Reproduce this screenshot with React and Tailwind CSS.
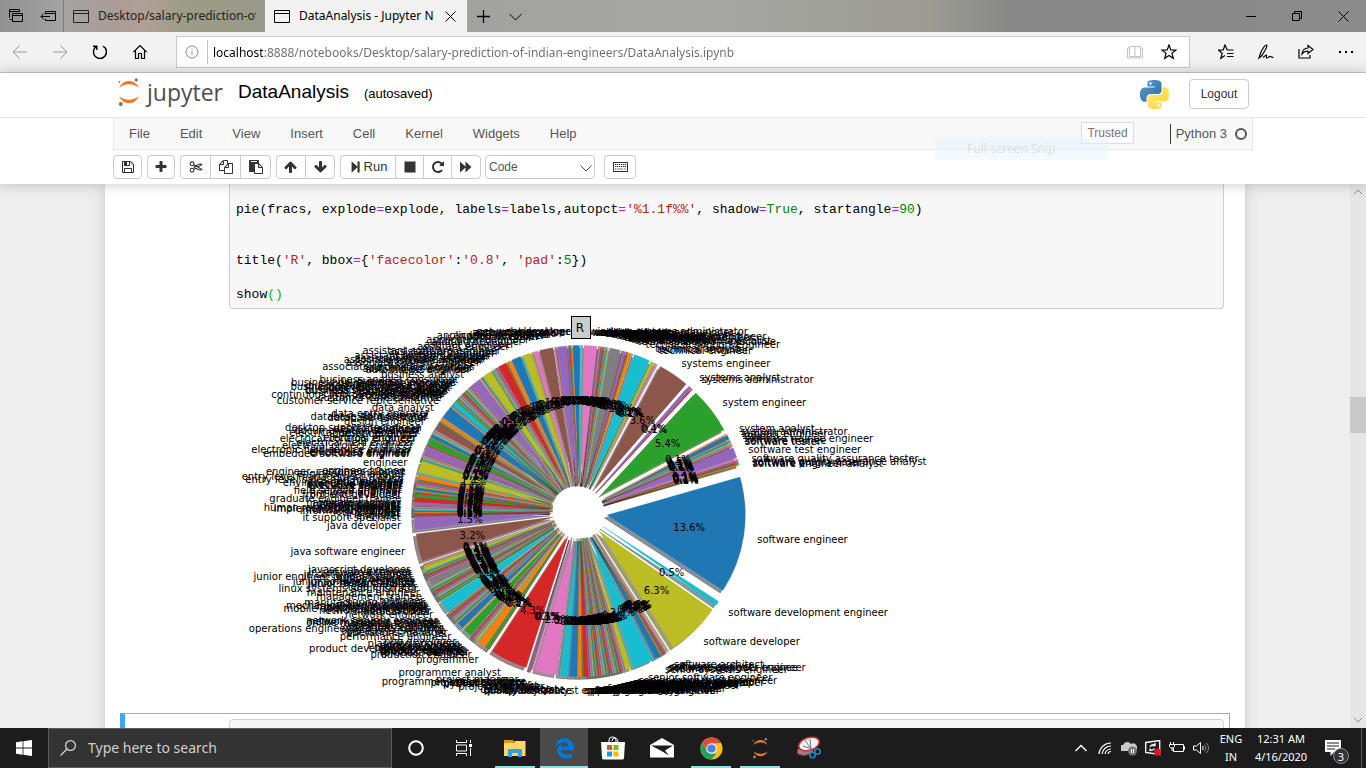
import React from 'react';
import { FaEdgeLegacy } from 'react-icons/fa';

/* ---------- pie chart data ---------- */

const PALETTE = ['#1f77b4', '#ff7f0e', '#2ca02c', '#d62728', '#9467bd', '#8c564b', '#e377c2', '#7f7f7f', '#bcbd22', '#17becf'];

// [start, end, palette index], in degrees counter-clockwise from the top.
const MAJOR = [
  [0, 2.7, 0], [4.3, 8.2, 4], [9, 14.6, 5], [15, 16.5, 6], [17.1, 20.4, 8], [20.8, 24.6, 0], [24.8, 26.1, 1],
  [26.3, 29.9, 3], [32.2, 36, 8], [37, 41.4, 4], [48.4, 50.4, 9], [51, 56, 0], [56.3, 57.3, 1], [57.5, 61, 5],
  [63, 63.9, 0], [64.1, 66.6, 2], [67.4, 70, 4], [72, 76.9, 8], [77.3, 79, 1], [81.8, 82.9, 0], [84.1, 85.4, 2],
  [85.5, 87, 3], [87, 88.2, 4], [91.6, 97, 4], [97, 108.5, 5], [109.8, 111.2, 8], [114.3, 117, 7],
  [122.7, 127.6, 9], [132.3, 135, 0], [135.4, 139, 2], [141, 141.8, 8], [142, 145.3, 1], [145.5, 146.6, 2],
  [146.8, 162.3, 3], [163.6, 172.6, 6], [172.9, 176.1, 9], [176.2, 179.3, 0], [179.4, 180.6, 1], [181, 183, 3],
  [196, 198.2, 8], [198.4, 206.8, 9], [207, 209.3, 0], [212.5, 235.2, 8], [235.2, 237, 9], [237, 286, 0],
  [288.4, 292.8, 4], [295.5, 297.4, 0], [297.8, 317.2, 2], [317.2, 317.6, 3], [317.6, 319, 4], [319, 332, 5],
  [332, 332.9, 6], [333.5, 334.5, 8], [334.6, 341.4, 9], [341.6, 343, 1], [343.8, 345, 4], [345.5, 350, 7],
  [353.7, 359, 6],
];

function buildSlices() {
  const out = [];
  MAJOR.forEach(([a, b, c], i) => {
    out.push({ a, b, c });
    const next = MAJOR[i + 1] ? MAJOR[i + 1][0] : 360;
    const gap = next - b;
    if (gap > 0.05) {
      const n = Math.max(1, Math.round(gap / 0.38));
      for (let k = 0; k < n; k += 1) {
        out.push({ a: b + (gap * k) / n, b: b + (gap * (k + 1)) / n, c: (c + 1 + k) % 10 });
      }
    }
  });
  return out;
}

const SLICES = buildSlices();
const CX = 351;
const CY = 202;
const R = 138;
const SHIFT = R * 0.2;
const LABEL_R = R * 1.3;
const rad = (d) => (d * Math.PI) / 180;
const at = (deg, r) => [-Math.sin(rad(deg)) * r, -Math.cos(rad(deg)) * r];

function wedge({ a, b }) {
  const [ox, oy] = at((a + b) / 2, SHIFT);
  const [x1, y1] = at(a, R);
  const [x2, y2] = at(b, R);
  const X = CX + ox;
  const Y = CY + oy;
  return `M${X.toFixed(2)} ${Y.toFixed(2)}L${(X + x1).toFixed(2)} ${(Y + y1).toFixed(2)}A${R} ${R} 0 0 0 ${(X + x2).toFixed(2)} ${(Y + y2).toFixed(2)}Z`;
}

function shade(hex) {
  const n = parseInt(hex.slice(1), 16);
  const f = (v) => Math.round(v * 0.3);
  return `rgb(${f(n >> 16)},${f((n >> 8) & 255)},${f(n & 255)})`;
}

// Labels with a readable place of their own: [height above the centre, text].
const LEFT = [
  [176, 'application developer'], [172, 'application engineer'], [170, 'android developer'], [167, 'asp.net developer'],
  [165, 'assistant engineer'], [161, 'assistant software engineer'], [160, 'assistant programmer'], [158, 'assistant manager'],
  [156, 'assistant systems engineer'], [155, 'associate developer'], [153, 'assistant system engineer'], [152, 'associate software engineer'],
  [151, 'associate manager'], [149, 'associate system engineer'], [145, 'associate technical operations'], [144, 'automation engineer'],
  [143, 'asst. project engineer'], [142, 'automotive engineer'], [137, 'business analyst'],
  [132, 'business analyst consultant'], [130, 'business consultant'], [129, 'business development executive'], [128, 'business office manager'],
  [126, 'business intelligence analyst'], [125, 'business development manager'], [124, 'business system analyst'], [123, 'cad drafter'],
  [122, 'business systems consultant'], [121, 'business technology analyst'], [120, 'catalog associate'], [119, 'civil engineer'], [118, 'client services associate'],
  [117, 'continuous improvement engineer'], [116, 'cnc programmer'], [114, 'customer care executive'], [111, 'customer service representative'],
  [104, 'data analyst'], [98, 'data entry operator'], [96, 'data scientist'], [95, 'database administrator'], [94, 'database developer'],
  [90, 'design engineer'], [84, 'desktop support technician'], [83, 'desktop engineer'], [82, 'developer'], [81, 'documentation specialist'],
  [79, 'electrical design engineer'], [78, 'dotnet developer'], [74, 'electrical engineer'], [73, 'electrical controls engineer'],
  [69, 'electrical field engineer'], [66, 'electrical project engineer'], [62, 'electronic field service engineer'], [60, 'electronics engineer'],
  [59, 'embedded engineer'], [58, 'embedded software engineer'], [49, 'engineer'], [41, 'engineer trainee'], [40, 'engineer- customer support'],
  [38, 'engineering manager'], [35, 'entry level management trainee'], [32, 'entry level sales and marketing'], [30, 'etl developer'],
  [29, 'environmental engineer'], [28, 'executive assistant'], [27, 'executive engineer'], [26, 'executive recruiter'], [25, 'faculty'],
  [23, 'field engineer'], [21, 'field service engineer'], [19, 'firmware engineer'], [17, 'front end developer'],
  [13, 'graduate engineer trainee'], [9, 'hardware engineer'], [8, 'graphic designer'], [7, 'help desk analyst'], [6, 'html developer'],
  [5, 'hr recruiter'], [4, 'human resources associate'], [3, 'implementation engineer'], [2, 'industrial engineer'], [1, 'information security'],
  [0, 'ios developer'], [-2, 'it analyst'], [-4, 'it engineer'], [-6, 'it support specialist'], [-14, 'java developer'], [-40, 'java software engineer'],
  [-58, 'javascript developer'], [-60, 'java trainee'], [-61, 'jr. software engineer'], [-63, 'jr. software developer'],
  [-65, 'junior engineer product support'], [-67, 'junior engineer'], [-69, 'junior recruiter'], [-70, 'junior software engineer'],
  [-71, 'junior research fellow'], [-72, 'junior system analyst'], [-75, 'lead engineer'], [-77, 'linux systems administrator'], [-81, 'maintenance engineer'],
  [-85, 'management trainee'], [-89, 'manager'], [-91, 'manufacturing engineer'], [-93, 'marketing analyst'], [-94, 'mechanical design engineer'],
  [-95, 'marketing coordinator'], [-96, 'mechanical engineer'], [-97, 'mobile application developer'], [-99, 'network administrator'],
  [-100, 'medical coder'], [-103, 'network engineer'], [-109, 'network security engineer'], [-110, 'network support engineer'],
  [-111, 'online marketing manager'], [-112, 'operation engineer'], [-114, 'operations analyst'], [-116, 'operations engineer'],
  [-117, 'operations engineer and jetty handling'], [-119, 'operations executive'], [-121, 'operations manager'], [-125, 'performance engineer'],
  [-130, 'php developer'], [-132, 'planning engineer'], [-134, 'portfolio analyst'], [-135, 'phone engineer'], [-136, 'process associate'],
  [-137, 'product development engineer'], [-138, 'process engineer'], [-139, 'product engineer'], [-140, 'product manager'], [-141, 'product designer'],
  [-143, 'production engineer'], [-148, 'programmer'], [-161, 'programmer analyst'], [-170, 'programmer analyst trainee'],
  [-171, 'project assistant'], [-171, 'project coordinator'], [-175, 'project engineer'],
];

const RIGHT = [
  [167, 'technical support engineer'], [161, 'technical engineer'], [162, 'technical recruiter'], [163, 'technical analyst'],
  [170, 'technical support executive'], [171, 'technical support specialist'], [172, 'technology analyst'], [173, 'telecom engineer'],
  [174, 'telecom support engineer'], [148, 'systems engineer'], [134, 'systems analyst'], [132, 'systems administrator'],
  [109, 'system engineer'], [83, 'system analyst'], [80, 'system administrator'], [78, 'support engineer'], [76, 'sql dba'], [73, 'software trainee engineer'],
  [71, 'software trainee'], [70, 'software tester'], [62, 'software test engineer'], [53, 'software quality assurance tester'],
  [50, 'software quality assurance analyst'], [49, 'software programmer'], [48, 'software engineer analyst'], [-28, 'software engineer'],
  [-101, 'software development engineer'], [-130, 'software developer'], [-153, 'software architect'], [-155, 'software analyst'],
  [-156, 'software engineer trainee'], [-156, 'software designer engineer'], [-157, 'site manager'], [-158, 'senior systems engineer'], [-166, 'senior software engineer'],
  [-171, 'senior software developer'], [-172, 'senior web developer'], [-173, 'senior sales executive'], [-174, 'senior project engineer'],
];

// Crowded labels spread over an arc: [from, to, texts].
const FANS = [
  [1.5, 13, ['.net developer', '.net web developer', 'account executive', 'account manager', 'admin assistant', 'analyst', 'android developer', 'app developer']],
  [160, 179.5, ['project manager', 'project officer', 'python developer', 'qa analyst', 'qa engineer', 'qa trainee', 'quality analyst', 'quality associate', 'quality assurance', 'quality analyst']],
  [180.5, 199, ['e operations analyst', 'quality assurance engineer', 'quality control engineer', 'quality engineer', 'r&d engineer', 'recruiter', 'recruitment coordinator', 'research analyst', 'research engineer', 'research scientist', 'rf engineer', 'risk consultant', 'ruby on rails developer', 'sales account manager', 'sales coordinator', 'sales engineer', 'sales executive', 'salesforce developer', 'sap abap consultant', 'sap analyst', 'secretary', 'seo engineer', 'senior design engineer', 'senior engineer', 'senior business analyst', 'senior quality engineer', 'senior network engineer', 'senior mechanical engineer']],
  [344, 357, ['testing engineer', 'test engineer', 'technical writer', 'telecommunication engineer', 'trainee engineer', 'trainee developer', 'trainee decision scientist', 'team lead', 'training specialist', 'ui developer', 'ux designer', 'visiting faculty', 'web application developer', 'web designer', 'web developer', 'web intern', 'website developer', 'windows systems administrator']],
];

function PieLabel({ x, y, text, right }) {
  return <text x={x.toFixed(1)} y={(y + 3.5).toFixed(1)} textAnchor={right ? 'start' : 'end'}>{text}</text>;
}

const reach = (h) => Math.sqrt(LABEL_R * LABEL_R - h * h);

function PieChart() {
  return (
    <svg viewBox="0 0 720 404" role="img" aria-label="R" className="block h-[404px] w-[720px] shrink-0 text-black" fontFamily="'DejaVu Sans', sans-serif" fontSize="10">
      <g transform="translate(-2.8 2.8)" fillOpacity="0.5" strokeOpacity="0.5" strokeWidth="0.6">
        {SLICES.map((s, i) => <path key={i} d={wedge(s)} fill={shade(PALETTE[s.c])} stroke={shade(PALETTE[s.c])} />)}
      </g>
      <g strokeWidth="0.3">
        {SLICES.map((s, i) => <path key={i} d={wedge(s)} fill={PALETTE[s.c]} stroke={PALETTE[s.c]} />)}
      </g>
      <g textAnchor="middle">
        {SLICES.map((s, i) => {
          const [x, y] = at((s.a + s.b) / 2, R * 0.8);
          return <text key={i} x={(CX + x).toFixed(1)} y={(CY + y + 3.5).toFixed(1)}>{`${((s.b - s.a) / 3.6).toFixed(1)}%`}</text>;
        })}
      </g>
      {LEFT.map(([h, t]) => <PieLabel key={t + h} x={CX - reach(h)} y={CY - h} text={t} />)}
      {RIGHT.map(([h, t]) => <PieLabel key={t + h} x={CX + reach(h)} y={CY - h} text={t} right />)}
      {FANS.map(([a, b, list]) => list.map((t, i) => {
        const [x, y] = at(a + ((b - a) * i) / (list.length - 1), LABEL_R);
        return <PieLabel key={a + t + i} x={CX + x} y={CY + y} text={t} right={a >= 180} />;
      }))}
      <rect x="342.5" y="7.5" width="19" height="22" fill="#cccccc" stroke="#000" />
      <text x="351" y="23" fontSize="12" textAnchor="middle">R</text>
    </svg>
  );
}

/* ---------- icons ---------- */

const ICONS = {
  save: 'M512 1536h768v-384h-768v384zm896 0h128v-896q0-14-10-38.5t-20-34.5l-281-281q-10-10-34-20t-39-10v416q0 40-28 68t-68 28h-576q-40 0-68-28t-28-68v-416h-128v1280h128v-416q0-40 28-68t68-28h832q40 0 68 28t28 68v416zm-384-928v-320q0-13-9.5-22.5t-22.5-9.5h-192q-13 0-22.5 9.5t-9.5 22.5v320q0 13 9.5 22.5t22.5 9.5h192q13 0 22.5-9.5t9.5-22.5zm640 32v928q0 40-28 68t-68 28h-1344q-40 0-68-28t-28-68v-1344q0-40 28-68t68-28h928q40 0 88 20t76 48l280 280q28 28 48 76t20 88z',
  plus: 'M1600 736v192q0 40-28 68t-68 28h-416v416q0 40-28 68t-68 28h-192q-40 0-68-28t-28-68v-416h-416q-40 0-68-28t-28-68v-192q0-40 28-68t68-28h416v-416q0-40 28-68t68-28h192q40 0 68 28t28 68v416h416q40 0 68 28t28 68z',
  copy: 'M1696 384q40 0 68 28t28 68v1216q0 40-28 68t-68 28h-960q-40 0-68-28t-28-68v-288h-544q-40 0-68-28t-28-68v-672q0-40 20-88t48-76l408-408q28-28 76-48t88-20h416q40 0 68 28t28 68v328q68-40 128-40h416zm-544 213l-299 299h299v-299zm-640-384l-299 299h299v-299zm196 647l316-316v-416h-384v416q0 40-28 68t-68 28h-416v640h512v-256q0-40 20-88t48-76zm956 804v-1152h-384v416q0 40-28 68t-68 28h-416v640h896z',
  paste: 'M768 1664h896v-640h-416q-40 0-68-28t-28-68v-416h-384v1152zm256-1440v-64q0-13-9.5-22.5t-22.5-9.5h-704q-13 0-22.5 9.5t-9.5 22.5v64q0 13 9.5 22.5t22.5 9.5h704q13 0 22.5-9.5t9.5-22.5zm256 672h299l-299-299v299zm512 128v672q0 40-28 68t-68 28h-960q-40 0-68-28t-28-68v-160h-544q-40 0-68-28t-28-68v-1344q0-40 28-68t68-28h1088q40 0 68 28t28 68v328q21 13 36 28l408 408q28 28 48 76t20 88z',
  up: 'M1611 971q0 51-37 90l-75 75q-38 38-91 38-54 0-90-38l-294-293v704q0 52-37.5 84.5t-90.5 32.5h-128q-53 0-90.5-32.5t-37.5-84.5v-704l-294 293q-36 38-90 38t-90-38l-75-75q-38-38-38-90 0-53 38-91l651-651q35-37 90-37 54 0 91 37l651 651q37 39 37 91z',
  repeat: 'M1664 256v448q0 26-19 45t-45 19h-448q-42 0-59-40-17-39 14-69l138-138q-148-137-349-137-104 0-198.5 40.5t-163.5 109.5-109.5 163.5-40.5 198.5 40.5 198.5 109.5 163.5 163.5 109.5 198.5 40.5q119 0 225-52t179-147q7-10 23-12 15 0 25 9l137 138q9 8 9.5 20.5t-7.5 22.5q-109 132-264 204.5t-327 72.5q-156 0-298-61t-245-164-164-245-61-298 61-298 164-245 245-164 298-61q147 0 284.5 55.5t244.5 156.5l130-129q29-31 70-14 39 17 39 59z',
  stop: 'M192 192h1408v1408H192z',
  forward: 'M130 190l700 650V190l760 706-760 706V952l-700 650z',
  step: 'M330 160l760 700V180h270v1432h-270V932l-760 700z',
};

function Fa({ name, flip }) {
  return (
    <svg viewBox="0 0 1792 1792" className={flip ? 'size-[14px] rotate-180' : 'size-[14px]'} fill="currentColor" aria-hidden="true">
      <path d={ICONS[name]} />
    </svg>
  );
}

function Line({ children, className = 'size-4', box = '0 0 16 16', w = 1 }) {
  return (
    <svg viewBox={box} className={className} fill="none" stroke="currentColor" strokeWidth={w} aria-hidden="true">
      {children}
    </svg>
  );
}

function JupyterMark({ className, dot = '#767677' }) {
  return (
    <svg viewBox="0 0 24 30" className={className} aria-hidden="true">
      <path d="M2 10C4 5 8 3 12 3s8 2 10 7C19 7.600 16 6.500 12 6.500S5 7.600 2 10zM2 19c2 5 6 7 10 7s8-2 10-7c-3 2.400-6 3.500-10 3.500S5 21.400 2 19z" fill="#F37726" />
      <circle cx="19.500" cy="2" r="1.700" fill={dot} />
      <circle cx="2" cy="4" r="1" fill={dot} />
      <circle cx="3.500" cy="27" r="2.100" fill={dot} />
    </svg>
  );
}

const SNAKE = 'M14.25.18l.9.2.73.26.59.3.45.32.34.34.25.34.16.33.1.3.04.26.02.2-.01.13V8.500l-.05.63-.13.55-.21.46-.26.38-.3.31-.33.25-.35.19-.35.14-.33.1-.3.07-.26.04-.21.02H8.770l-.69.05-.59.14-.5.22-.41.27-.33.32-.27.35-.2.36-.15.37-.1.35-.07.32-.04.27-.02.21v3.060H3.170l-.21-.03-.28-.07-.32-.12-.35-.18-.36-.26-.36-.36-.35-.46-.32-.59-.28-.73-.21-.88-.14-1.050-.05-1.230.06-1.220.16-1.040.24-.87.32-.71.36-.57.4-.44.42-.33.42-.24.4-.16.36-.1.32-.05.24-.01h.16l.06.01h8.160v-.83H6.180l-.01-2.750-.02-.37.05-.34.11-.31.17-.28.25-.26.31-.23.38-.2.44-.18.51-.15.58-.12.64-.1.71-.06.77-.04.84-.02 1.270.05zm-6.300 1.980l-.23.33-.08.41.08.41.23.34.33.22.41.09.41-.09.33-.22.23-.34.08-.41-.08-.41-.23-.33-.33-.22-.41-.09-.41.09z';

function PythonLogo() {
  return (
    <svg viewBox="0 0 24 24" className="size-[29px]" aria-hidden="true">
      <defs>
        <linearGradient id="pyBlue" x1="0" y1="0" x2="1" y2="1"><stop offset="0" stopColor="#5a9fd4" /><stop offset="1" stopColor="#306998" /></linearGradient>
        <linearGradient id="pyYellow" x1="0" y1="0" x2="1" y2="1"><stop offset="0" stopColor="#ffd43b" /><stop offset="1" stopColor="#ffe873" /></linearGradient>
      </defs>
      <path d={SNAKE} fill="url(#pyBlue)" />
      <path d={SNAKE} fill="url(#pyYellow)" transform="rotate(180 12 12)" />
    </svg>
  );
}

const WindowIcon = () => (
  <Line className="size-4 shrink-0"><path d="M.5 2.500h15v12H.5zM.5 5.500h15" /></Line>
);

/* ---------- browser chrome ---------- */

function IconButton({ label, className = '', children }) {
  return (
    <button type="button" aria-label={label} className={`flex items-center justify-center ${className}`}>
      {children}
    </button>
  );
}

function TabBar() {
  return (
    <div className="flex h-8 shrink-0 items-stretch bg-[linear-gradient(90deg,#919191_0px,#a3a3a3_64px,#a99d97_110px,#b19f94_145px,#9d9c85_185px,#989a8a_265px,#a2a29f_480px,#a6a6a3_700px,#9c9c94_930px,#878787_1010px,#8c8c8c_1366px)] text-black">
      <IconButton label="Tabs set aside" className="w-8">
        <Line><path d="M1.500 9.500v-8h10v2M1.500 3.500h10" /><path d="M4.500 5.500h10v8h-10zM4.500 7.500h10" /><path d="M2 11.500h2.500" /></Line>
      </IconButton>
      <IconButton label="Set tabs aside" className="w-8 border-r border-[#7d7d7d]">
        <Line><path d="M5.500 6V3.500h10v9h-10V11M5.500 5.500h10M1 8.500h9M4 5.500l-3 3 3 3" /></Line>
      </IconButton>
      <button type="button" className="flex w-[201px] items-center gap-[9px] overflow-hidden px-[9px] text-[#222]">
        <WindowIcon />
        <span className="overflow-hidden whitespace-nowrap text-xs">Desktop/salary-prediction-of-indian</span>
      </button>
      <div className="flex w-[202px] items-center bg-[#f2f2f2] pl-[9px]">
        <button type="button" className="flex w-40 items-center gap-[9px] overflow-hidden">
          <WindowIcon />
          <span className="overflow-hidden whitespace-nowrap text-xs">DataAnalysis - Jupyter Notebook</span>
        </button>
        <IconButton label="Close tab" className="w-8"><Line className="size-[11px]" box="0 0 11 11"><path d="M.5.5l10 10M10.500.5l-10 10" /></Line></IconButton>
      </div>
      <IconButton label="New tab" className="w-8"><Line className="size-[13px]" box="0 0 13 13" w={1.3}><path d="M6.500 0v13M0 6.500h13" /></Line></IconButton>
      <IconButton label="Tab previews" className="w-8"><Line className="size-[13px]" box="0 0 13 13"><path d="M.5 4l6 6 6-6" /></Line></IconButton>
      <div className="flex-1" />
      <IconButton label="Minimize" className="w-[46px]"><Line className="size-[10px]" box="0 0 10 10"><path d="M0 5.500h10" /></Line></IconButton>
      <IconButton label="Restore" className="w-[46px]"><Line className="size-[10px]" box="0 0 10 10"><path d="M.5 2.500h7v7h-7zM2.500 2.500v-2h7v7h-2" /></Line></IconButton>
      <IconButton label="Close" className="w-[46px]"><Line className="size-[11px]" box="0 0 11 11"><path d="M.5.5l10 10M10.500.5l-10 10" /></Line></IconButton>
    </div>
  );
}

function AddressBar() {
  return (
    <div className="flex h-[41px] shrink-0 items-center border-b border-[#c9c9c9] bg-[#f2f2f2] text-black">
      <IconButton label="Back" className="w-10 text-[#9b9b9b]"><Line><path d="M1 8h14M7.500 1.500L1 8l6.500 6.500" /></Line></IconButton>
      <IconButton label="Forward" className="w-10 text-[#9b9b9b]"><Line><path d="M1 8h14M8.500 1.500L15 8l-6.500 6.500" /></Line></IconButton>
      <IconButton label="Refresh" className="w-10"><Line w={1.4}><path d="M11 2.200a6.500 6.500 0 1 1-6.500.2M4.800 6V2.200H1" /></Line></IconButton>
      <IconButton label="Home" className="w-10"><Line w={1.2}><path d="M1.500 8L8 1.500 14.500 8M3.500 7v7.500h3v-5h3v5h3V7" /></Line></IconButton>
      <div className="ml-4 flex h-8 flex-1 items-center border border-[#c9c9c9] bg-white">
        <IconButton label="Site information" className="h-6 w-[31px] border-r border-[#c4c4c4] text-[#8a8a8a]">
          <Line className="size-[14px]" box="0 0 14 14"><circle cx="7" cy="7" r="6" /><path d="M7 6v4M7 3.500v1" /></Line>
        </IconButton>
        <div className="ml-[5px] flex-1 pt-px text-xs">
          <input aria-label="Address" defaultValue="localhost:8888/notebooks/Desktop/salary-prediction-of-indian-engineers/DataAnalysis.ipynb" className="w-full bg-[linear-gradient(90deg,#000_50px,#6d6d6d_50px)] bg-clip-text text-transparent outline-none" />
        </div>
        <IconButton label="Reading view" className="w-8 text-[#c2c2c2]"><Line><path d="M8 2.500H2.500v10H8zM8 2.500h5.500v10H8M2.500 4h-2v10h15V4h-2" /></Line></IconButton>
        <IconButton label="Add to favorites" className="mr-[6px] ml-1 w-7"><Line w={1.2}><path d="M8 1l1.800 4.900 5.200.2-4.100 3.200 1.400 5L8 11.400l-4.300 2.900 1.400-5L1 6.100l5.200-.2z" /></Line></IconButton>
      </div>
      <div className="ml-4 flex">
        <IconButton label="Favorites" className="w-10"><Line w={1.2}><path d="M15.500 6H9.200L7 1 5.200 5.900.5 6.100l3.700 3.200-1.400 5L7 11.500M9 9.500h6.500M9 12.500h6.500" /></Line></IconButton>
        <IconButton label="Add notes" className="w-10"><Line w={1.2}><path d="M1 14L3 8C5 4 7 1 8.500 1c1 1 0 3-1.500 5.500L3.500 12 1 14zM5 13.500c2-2 3-3 3.500-2.500s-1 3 .5 3 2-2 3.500-1.500S14 14 15.500 13" /></Line></IconButton>
        <IconButton label="Share" className="w-10"><Line w={1.2}><path d="M1 5v9h11v-3M10 1.500l5 4-5 4V7C7 7 5.500 8 4 10c.3-3.500 2.500-5.700 6-6z" /></Line></IconButton>
        <IconButton label="More" className="w-10"><Line><path d="M1 8h2M7 8h2M13 8h2" strokeWidth="2" /></Line></IconButton>
      </div>
    </div>
  );
}

/* ---------- notebook ---------- */

const BTN = 'flex h-6 items-center justify-center border border-[#ccc] bg-white text-[#333] ';
const MENUS = ['File', 'Edit', 'View', 'Insert', 'Cell', 'Kernel', 'Widgets', 'Help'];

function NotebookHeader() {
  return (
    <header className="relative z-10 shrink-0 bg-white pb-[5px] shadow-[0_0_12px_1px_rgba(87,87,87,0.3)]">
      <div className="border-b border-[#e7e7e7]">
        <div className="mx-auto flex h-11 max-w-[1140px] items-center pr-1 pb-[2px] pl-1">
          <a href="#tree" className="flex items-center gap-[6px] pb-1 text-[#4e4e4e]">
            <JupyterMark className="h-[29px] w-6" />
            <span className="font-['Open_Sans',sans-serif] text-[23px] leading-7">jupyter</span>
          </a>
          <h1 className="ml-[15px] pb-1 text-[19px] text-black">DataAnalysis</h1>
          <span className="ml-[15px] text-[13px] text-black">(autosaved)</span>
          <div className="flex-1" />
          <PythonLogo />
          <button type="button" className="ml-5 h-[30px] w-[60px] rounded-sm border border-[#ccc] bg-white pb-px text-xs text-[#333]">Logout</button>
        </div>
      </div>
      <div className="mx-auto max-w-[1140px]">
        <nav className="flex h-8 items-center border border-t-0 border-[#e7e7e7] bg-[#f8f8f8] text-[13px] text-[#555]">
          {MENUS.map((m) => <button key={m} type="button" className="px-[15px]">{m}</button>)}
          <div className="flex-1" />
          <button type="button" className="mb-[2px] h-[22px] border border-[#ddd] bg-white/60 px-[5px] text-xs text-[#777]">Trusted</button>
          <span className="ml-9 flex h-5 items-center gap-2 border-l border-[#333] px-[5px]">
            Python 3
            <Line className="size-3" box="0 0 12 12" w={2}><circle cx="6" cy="6" r="5" /></Line>
          </span>
        </nav>
        <div className="flex h-[29px] items-end gap-[5px] text-[13px]">
          <button type="button" aria-label="Save" className={BTN + 'w-[29px] rounded-sm'}><Fa name="save" /></button>
          <button type="button" aria-label="Insert cell below" className={BTN + 'w-[28px] rounded-sm'}><Fa name="plus" /></button>
          <div className="flex -space-x-px">
            <button type="button" aria-label="Cut" className={BTN + 'w-[31px] rounded-l-sm'}>
              <Line className="size-[14px]" box="0 0 14 14" w={1.1}><circle cx="3" cy="3.800" r="1.900" /><circle cx="3" cy="10.200" r="1.900" /><path d="M4.800 4.700l8 4.700-1.500.8-6.600-2.700M4.800 9.300l8-4.700-1.500-.8-6.600 2.700" /></Line>
            </button>
            <button type="button" aria-label="Copy" className={BTN + 'w-[31px]'}><Fa name="copy" /></button>
            <button type="button" aria-label="Paste" className={BTN + 'w-[31px] rounded-r-sm'}><Fa name="paste" /></button>
          </div>
          <div className="flex -space-x-px">
            <button type="button" aria-label="Move up" className={BTN + 'w-[30px] rounded-l-sm'}><Fa name="up" /></button>
            <button type="button" aria-label="Move down" className={BTN + 'w-[30px] rounded-r-sm'}><Fa name="up" flip /></button>
          </div>
          <div className="flex -space-x-px">
            <button type="button" className={BTN + 'w-14 gap-px rounded-l-sm'}><Fa name="step" />Run</button>
            <button type="button" aria-label="Interrupt" className={BTN + 'w-[29px]'}><Fa name="stop" /></button>
            <button type="button" aria-label="Restart" className={BTN + 'w-[29px]'}><Fa name="repeat" /></button>
            <button type="button" aria-label="Restart and run all" className={BTN + 'w-[30px] rounded-r-sm'}><Fa name="forward" /></button>
          </div>
          <div className="relative -ml-px">
            <select aria-label="Cell type" className="h-6 w-[110px] appearance-none rounded-sm border border-[#ccc] bg-white pl-[3px] text-xs text-[#555]">
              <option>Code</option>
              <option>Markdown</option>
            </select>
            <span className="pointer-events-none absolute top-[7px] right-[3px] text-[#444]"><Line className="size-3" box="0 0 12 12"><path d="M.5 3.500L6 9l5.500-5.500" /></Line></span>
          </div>
          <button type="button" aria-label="Open the command palette" className={BTN + 'ml-1 w-8 rounded-sm'}>
            <Line className="h-[10px] w-[15px]" box="0 0 15 10"><rect x=".5" y=".5" width="14" height="9" /><path d="M2 2.500h11M2 4.500h11M2 7h1.500M4.500 7h6M11.500 7H13" strokeDasharray="1.300 .7" strokeWidth="1.200" /></Line>
          </button>
        </div>
      </div>
      <div className="pointer-events-none absolute top-[65px] right-[258px] h-[22px] w-[173px] bg-[#e3f3ff]/45 pl-8 font-['Noto_Sans',sans-serif] text-xs leading-[22px] text-[#e2dedb]">Full-screen Snip</div>
    </header>
  );
}

const S = ({ children }) => <span className="text-[#ba2121]">{children}</span>;
const K = ({ children }) => <span className="text-[#008000]">{children}</span>;
const O = () => <span className="text-[#aa22ff]">=</span>;

function Notebook() {
  return (
    <main className="flex min-h-0 flex-1 bg-[#eee]">
      <div className="min-w-0 flex-1 overflow-hidden">
        <div className="mx-auto max-w-[1140px] bg-white px-[15px] shadow-[0_0_12px_1px_rgba(87,87,87,0.2)]">
          <div className="pr-[6px] pl-[109px]">
            <pre className="rounded-b-sm border border-t-0 border-[#cfcfcf] bg-[#f7f7f7] px-[6px] pt-[17px] pb-[5px] font-['Liberation_Mono',monospace] text-[13px] leading-[17px] text-black">
              pie(fracs, explode<O />explode, labels<O />labels,autopct<O /><S>'%1.1f%%'</S>, shadow<O /><K>True</K>, startangle<O /><K>90</K>){'\n\n\n'}
              title(<S>'R'</S>, bbox<O />{'{'}<S>'facecolor'</S>:<S>'0.8'</S>, <S>'pad'</S>:<K>5</K>{'}'}){'\n\n'}
              show<span className="text-[#00bb00]">()</span>
            </pre>
          </div>
          <div className="flex pl-[109px]"><PieChart /></div>
          <div className="border border-l-[5px] border-[#ababab] border-l-[#42a5f5] pt-[5px] pr-[5px] pl-[104px]">
            <div className="h-12 rounded-sm border border-[#cfcfcf] bg-[#f7f7f7]" />
          </div>
        </div>
      </div>
      <div className="flex w-4 shrink-0 flex-col items-center bg-[#e6e6e6] text-[#8a8a8a]">
        <Line className="size-4"><path d="M4 10l4-4 4 4" /></Line>
        <div className="flex-[197]" />
        <div className="h-9 w-full bg-[#c9c9c9]" />
        <div className="flex-[279]" />
        <Line className="size-4"><path d="M4 6l4 4 4-4" /></Line>
      </div>
    </main>
  );
}

/* ---------- taskbar ---------- */

function Task({ label, open, active, children }) {
  return (
    <button type="button" aria-label={label} className={`relative flex h-10 w-12 items-center justify-center ${active ? 'bg-[#4a4a4a]' : ''}`}>
      {children}
      {open && <span className={`absolute bottom-0 h-[2px] bg-[#86e3e8] ${active ? 'w-full' : 'w-10'}`} />}
    </button>
  );
}

function Taskbar() {
  return (
    <footer className="flex h-10 shrink-0 items-center bg-[#1c1c1c] font-['Noto_Sans',sans-serif] text-white">
      <IconButton label="Start" className="w-12">
        <svg viewBox="0 0 16 16" className="size-4" fill="#fff"><path d="M0 2.200L6.600 1.300v6.300H0zM7.400 1.200L16 0v7.600H7.400zM0 8.400h6.600v6.300L0 13.800zM7.400 8.400H16V16l-8.600-1.200z" /></svg>
      </IconButton>
      <label className="flex h-10 w-[344px] items-center gap-3 border border-[#5a5a5a] bg-[#333] pl-[11px] text-[#d8d8d8]">
        <Line className="size-4 shrink-0" w={1.2}><circle cx="10.500" cy="5.500" r="4.900" /><path d="M7 9L.5 15.500" /></Line>
        <input type="text" placeholder="Type here to search" className="min-w-0 flex-1 bg-transparent text-sm outline-none placeholder:text-[#d0d0d0]" />
      </label>
      <IconButton label="Cortana" className="w-12"><Line w={2}><circle cx="8" cy="8" r="6.800" /></Line></IconButton>
      <IconButton label="Task view" className="w-12">
        <Line><path d="M.5 0v2.500h10V0M.5 16v-2.500h10V16M.5 5h10v6H.5zM14.500 0v3M14.500 8v8" /><path d="M13 4h3v3h-3z" fill="#fff" stroke="none" /></Line>
      </IconButton>
      <div className="ml-[3px] flex gap-px">
        <Task label="File Explorer" open>
          <svg viewBox="0 0 22 18" className="h-[18px] w-[22px]"><path d="M0 1h9l1 1.500V4H0z" fill="#d99a10" /><path d="M0 4h10l1-2h10.500v15H0z" fill="#ffd667" /><path d="M4 11q0-1 1-1h12q1 0 1 1v7h-4v-4H8v4H4z" fill="#3f9be0" /></svg>
        </Task>
        <Task label="Microsoft Edge" open active><FaEdgeLegacy className="size-[21px] text-[#0078d7]" /></Task>
        <Task label="Microsoft Store">
          <svg viewBox="0 0 24 24" className="size-6"><path d="M8 7V4q0-3 3-3h1q3 0 3 3v3M11 5q0-3 3-3t3 5" fill="none" stroke="#fff" /><path d="M0 6h24l-1 16q0 1.500-2 1.500H3q-2 0-2-1.500z" fill="#fff" /><path d="M6 9h5v5H6z" fill="#f25022" /><path d="M12.500 9h5v5h-5z" fill="#7fba00" /><path d="M6 15.500h5v5H6z" fill="#00a4ef" /><path d="M12.500 15.500h5v5h-5z" fill="#ffb900" /></svg>
        </Task>
        <Task label="Mail">
          <svg viewBox="0 0 24 20" className="h-5 w-6"><path d="M0 7l12-7 12 7v12.500H0z" fill="#fff" /><path d="M1 7.500h22l-8 5 4 5-7.500-4.500z" fill="#1c1c1c" /></svg>
        </Task>
        <Task label="Google Chrome" open>
          <svg viewBox="0 0 24 24" className="size-[23px]"><circle cx="12" cy="12" r="11.500" fill="#fbc116" /><path d="M2.040 6.250A11.500 11.500 0 0 1 21.960 6.250L12 6.500 7.200 14.800z" fill="#dd4b3e" /><path d="M2.040 6.250l5.200 8.500L12 17.500h4.800l-4.800 6A11.500 11.500 0 0 1 2.040 6.250z" fill="#1da362" /><circle cx="12" cy="12" r="5.500" fill="#f2f2f2" /><circle cx="12" cy="12" r="4.300" fill="#4a80ec" /></svg>
        </Task>
        <Task label="Jupyter Notebook" open><JupyterMark className="h-[23px] w-[17px]" dot="#8a8a8a" /></Task>
        <Task label="Snipping Tool">
          <svg viewBox="0 0 24 24" className="size-6"><ellipse cx="8" cy="15" rx="8" ry="4" fill="#8a8a8a" stroke="#c33" transform="rotate(-8 8 15)" /><ellipse cx="12" cy="8" rx="10.500" ry="6.300" fill="#f2f2f2" stroke="#c8343a" strokeWidth="1.500" transform="rotate(-18 12 8)" /><path d="M8 4l8 12M13 3l1 10M6 10l9 3" stroke="#777" /><circle cx="15.500" cy="19" r="2.700" fill="none" stroke="#1a86cc" strokeWidth="1.600" /><circle cx="20.500" cy="15.500" r="2.700" fill="none" stroke="#1a86cc" strokeWidth="1.600" /></svg>
        </Task>
      </div>
      <div className="flex-1" />
      <IconButton label="Show hidden icons" className="w-6"><Line className="size-3" box="0 0 12 12" w={1.4}><path d="M.5 9L6 3.500 11.500 9" /></Line></IconButton>
      <IconButton label="Network" className="w-6"><Line className="size-[14px]" box="0 0 14 14" w={1.2}><path d="M1 13A12 12 0 0 1 13 2M4 13a9 9 0 0 1 9-8M7 13a6 6 0 0 1 6-5M10 13a3 3 0 0 1 3-2.500" /></Line></IconButton>
      <IconButton label="OneDrive" className="w-6">
        <svg viewBox="0 0 16 16" className="size-4"><path d="M1 11a3 3 0 0 1 1-6 4.500 4.500 0 0 1 8-1 4 4 0 0 1 4 7z" fill="#c9c9c9" /><circle cx="11.500" cy="11" r="4.500" fill="#777" /><path d="M10.500 9v4M12.500 9v4" stroke="#fff" /></svg>
      </IconButton>
      <IconButton label="Windows Update" className="w-6">
        <Line w={1.3}><path d="M.7 2.500l14-2v14l-14-2zM5 7q1-3 5-2M10 3v2.500H7.500M5 11V8.500M5 10q3 1 4.500-1.500" /><circle cx="12.500" cy="12" r="3.500" fill="#e81123" stroke="none" /></Line>
      </IconButton>
      <IconButton label="Battery" className="w-6"><Line><path d="M5.500 4.500h9v7h-10V8M14.500 6.500h1v3h-1M1.500 2v2M4.500 2v2M.5 4.500h5v2q-1 1.500-2.500 1.500T.5 6.500zM3 8v2.500h1.500" /></Line></IconButton>
      <IconButton label="Volume" className="w-6"><Line><path d="M.5 6h3l4-3.500v11L3.500 10h-3zM9.500 6q1.500 2 0 4" /><path d="M11.500 4.500q3 3.500 0 7M13.500 3q4 5 0 10" stroke="#888" /></Line></IconButton>
      <button type="button" className="w-9 text-center text-[11px] leading-[18px]">ENG<br />IN</button>
      <button type="button" className="w-16 text-center text-[11px] leading-[18px] whitespace-nowrap">12:31 AM<br />4/16/2020</button>
      <button type="button" aria-label="3 new notifications" className="relative flex h-10 w-12 items-center justify-center">
        <svg viewBox="0 0 16 16" className="mr-2 size-4"><path d="M0 0h16v12H9l-3.500 4v-4H0z" fill="#fff" /><path d="M2 3h12M2 6h12M2 9h8" stroke="#1c1c1c" strokeWidth="1.200" /></svg>
        <span className="absolute right-3 bottom-1 flex size-4 items-center justify-center rounded-full border border-[#8a8a8a] bg-[#333] text-[11px] leading-none">3</span>
      </button>
      <div className="h-10 w-[5px] border-l border-[#5a5a5a]" />
    </footer>
  );
}

export default function App() {
  return (
    <div className="flex h-screen flex-col overflow-hidden bg-white font-['Liberation_Sans',Arial,sans-serif]">
      <div className="shrink-0 font-['Noto_Sans',sans-serif]">
        <TabBar />
        <AddressBar />
      </div>
      <NotebookHeader />
      <Notebook />
      <Taskbar />
    </div>
  );
}
